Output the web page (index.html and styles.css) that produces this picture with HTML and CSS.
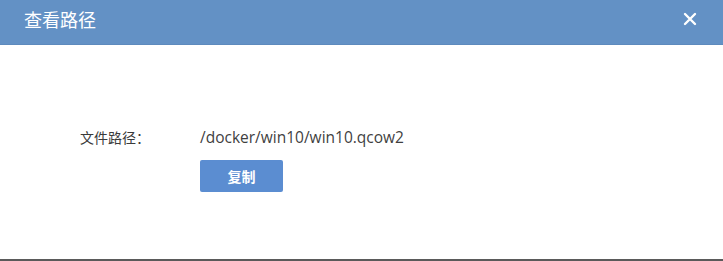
FILE: index.html
```html
<!DOCTYPE html>
<html lang="zh">
<head>
<meta charset="utf-8">
<link rel="stylesheet" href="styles.css">
</head>
<body>
<div class="dialog">
  <div class="header">
    <span class="title">查看路径</span>
    <span class="close">
      <svg width="14" height="14" viewBox="0 0 14 14"><path d="M2 2L12 12M12 2L2 12" stroke="#fff" stroke-width="2.4" stroke-linecap="round"/></svg>
    </span>
  </div>
  <div class="body">
    <div class="row">
      <span class="label">文件路径：</span>
      <span class="value">/docker/win10/win10.qcow2</span>
    </div>
    <div class="actions">
      <button class="btn">复制</button>
    </div>
  </div>
  <div class="footer-line"></div>
</div>
</body>
</html>
```
FILE: styles.css
```css
* { box-sizing: border-box; }
html, body { margin: 0; padding: 0; background: #fff; }
body { font-family: "Microsoft YaHei", "Noto Sans CJK SC", "Noto Sans", sans-serif; }
.dialog { width: 723px; height: 261px; display: flex; flex-direction: column; }
.header {
  height: 45px; background: #6391c5; border-bottom: 1px solid #5d8abd;
  display: flex; align-items: center; justify-content: space-between;
  padding: 0 24px 0 24px;
}
.title { color: #fff; font-size: 18px; line-height: 1; margin-top: -6px; }
.close { display: flex; margin-top: -7px; margin-right: 2px; }
.body { flex: 1; padding-top: 82px; }
.row { display: flex; align-items: center; height: 20px; }
.label { width: 120px; padding-left: 80px; box-sizing: content-box; font-size: 14px; color: #3a3a3a; }
.value { font-size: 15.5px; color: #3f3f3f; font-family: "Open Sans", "Noto Sans", sans-serif; letter-spacing: 0; }
.actions { padding-left: 200px; margin-top: 13px; }
.btn {
  width: 83px; height: 32px; border: none; border-radius: 2px;
  background: #5b8dd1; color: #fff; font-size: 14px; font-weight: bold;
  font-family: "Noto Sans CJK SC", sans-serif; padding: 0;
}
.footer-line { height: 2px; background: #5a5a5a; }
```
